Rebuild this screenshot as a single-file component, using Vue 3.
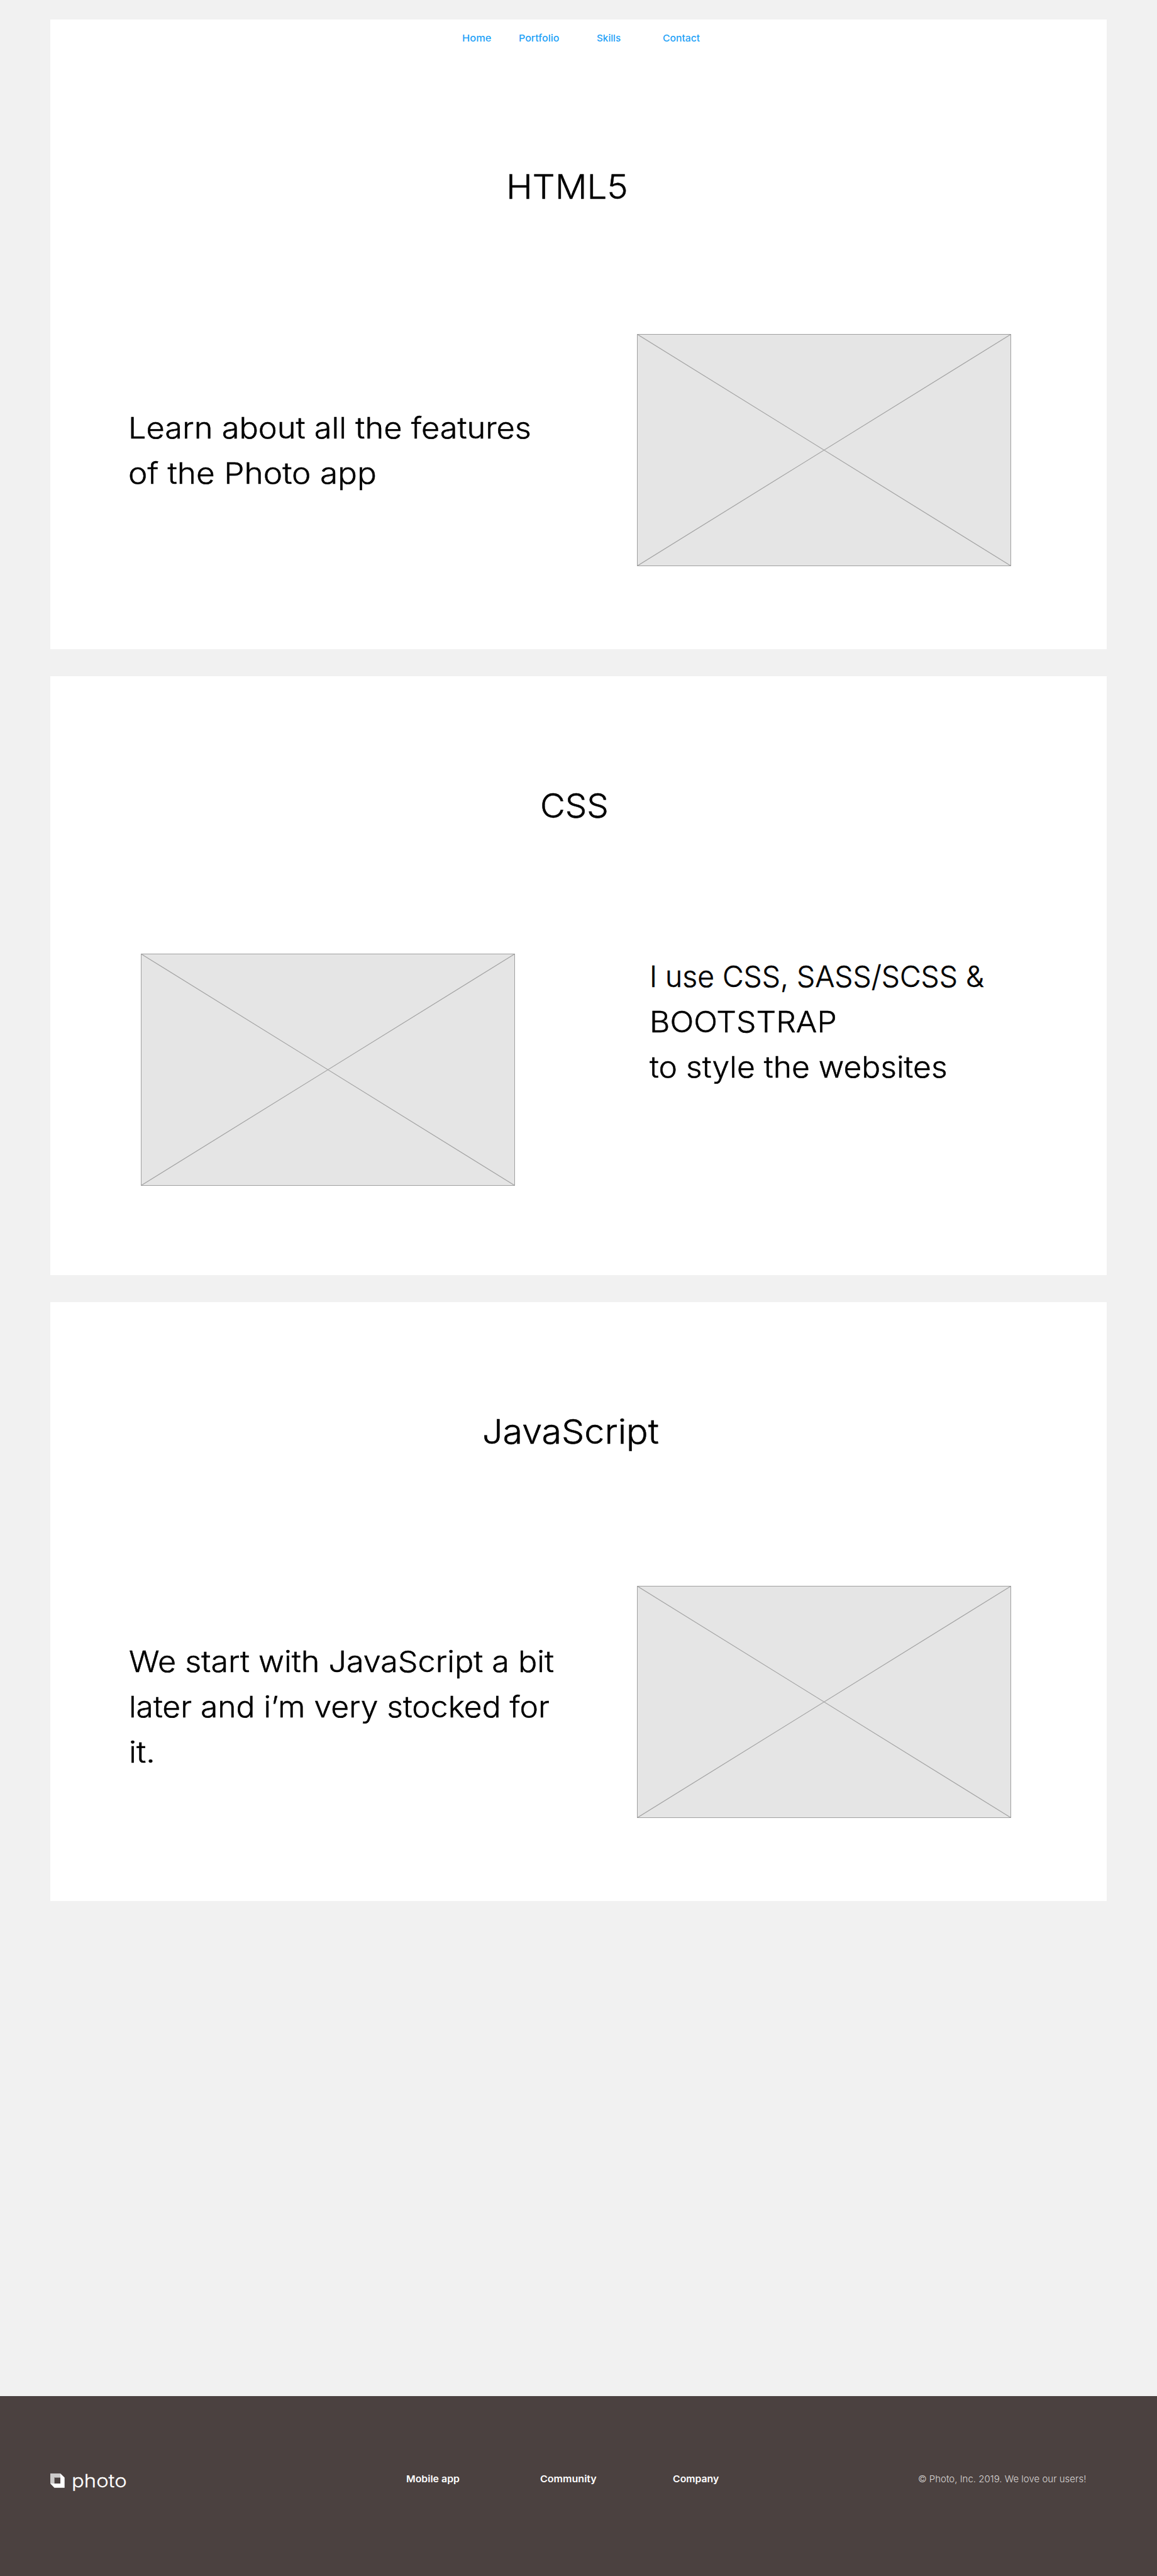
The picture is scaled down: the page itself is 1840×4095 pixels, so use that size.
<script setup>
const nav = [
  { label: 'Home', stretch: 1.096 },
  { label: 'Portfolio', stretch: 1.068 },
  { label: 'Skills', stretch: 1.017 },
  { label: 'Contact', stretch: 1.047 },
]

const cards = [
  {
    id: 'html',
    title: { text: 'HTML5', stretch: 1.045 },
    lines: [
      { text: 'Learn about all the features', stretch: 1.075 },
      { text: 'of the Photo app', stretch: 1.092 },
    ],
  },
  {
    id: 'css',
    title: { text: 'CSS', stretch: 1.012 },
    lines: [
      { text: 'I use CSS, SASS/SCSS &', stretch: 0.983 },
      { text: 'BOOTSTRAP', stretch: 1.061 },
      { text: 'to style the websites', stretch: 1.059 },
    ],
  },
  {
    id: 'js',
    title: { text: 'JavaScript', stretch: 1.063 },
    lines: [
      { text: 'We start with JavaScript a bit', stretch: 1.069 },
      { text: 'later and i’m very stocked for', stretch: 1.058 },
      { text: 'it.', stretch: 1.092 },
    ],
  },
]

const links = [
  { label: 'Mobile app', stretch: 1.06 },
  { label: 'Community', stretch: 1.07 },
  { label: 'Company', stretch: 1.054 },
]

// Widens the letterforms horizontally from their left edge.
const wide = (stretch) => ({ transform: `scaleX(${stretch})` })
</script>

<template>
  <div class="page">
    <main>
      <section v-for="(card, i) in cards" :key="card.id" class="card" :class="card.id">
        <nav v-if="i === 0" class="nav">
          <a v-for="item in nav" :key="item.label" class="wide" :style="wide(item.stretch)">{{ item.label }}</a>
        </nav>
        <h2><span class="wide" :style="wide(card.title.stretch)">{{ card.title.text }}</span></h2>
        <div class="row">
          <p>
            <span v-for="line in card.lines" :key="line.text" class="wide" :style="wide(line.stretch)">{{ line.text }}</span>
          </p>
          <svg class="placeholder" width="595" height="369" viewBox="0 0 595 369">
            <rect x="0.5" y="0.5" width="594" height="368" fill="#e5e5e5" stroke="#a0a0a0" />
            <path d="M.5 .5 594.5 368.5M594.5 .5 .5 368.5" stroke="#a3a3a3" stroke-width="1.2" fill="none" />
          </svg>
        </div>
      </section>
    </main>

    <footer>
      <div class="brand">
        <svg width="23" height="23" viewBox="0 0 23 23">
          <path d="M16 0 22.7 6.5V22.7H6.5L0 16H16Z" fill="#fff" />
          <path fill-rule="evenodd" d="M0 0H16V16H0ZM6 6V16H16V6Z" fill="#cbc9c9" />
          <path d="M6 6H16V7H7V16H6Z" fill="#999494" />
          <path d="M7 7H16V16H7Z" fill="#4b4140" />
        </svg>
        <span class="wide" :style="wide(1.133)">photo</span>
      </div>
      <div class="links">
        <a v-for="link in links" :key="link.label" class="wide" :style="wide(link.stretch)">{{ link.label }}</a>
      </div>
      <small>© Photo, Inc. 2019. We love our users!</small>
    </footer>
  </div>
</template>

<style>
body {
  margin: 0;
  background: #f1f1f1;
}
</style>

<style scoped>
.page {
  box-sizing: border-box;
  width: 1840px;
  height: 4095px;
  padding-top: 31px;
  display: flex;
  flex-direction: column;
  justify-content: space-between;
  overflow: hidden;
  background: #f1f1f1;
  color: #000;
  font-family: Inter, "Liberation Sans", sans-serif;
  white-space: nowrap;
}
.wide {
  display: block;
  width: max-content;
  transform-origin: 0 50%;
}
main {
  display: flex;
  flex-direction: column;
  gap: 43px;
  margin: 0 80px;
}
.card {
  height: 952px;
  background: #fff;
}
.card.html {
  height: 1001px;
}
.nav {
  display: grid;
  grid-template-columns: 89.5px 124px 104.8px auto;
  padding: 20px 0 0 655.3px;
  font-size: 15px;
  font-weight: 500;
  line-height: 20px;
  color: #1ea1f7;
}
h2 {
  margin: 0;
  padding-top: 171px;
  font-size: 54px;
  font-weight: 300;
  line-height: 70px;
  -webkit-text-stroke: 0.5px #000;
}
.html h2 {
  padding: 191px 0 0 724.7px;
}
.css h2 {
  padding-left: 779.1px;
}
.js h2 {
  padding-left: 687.3px;
}
.row {
  display: flex;
  align-items: flex-start;
  margin-top: 199px;
  padding-left: 124px;
}
.css .row {
  flex-direction: row-reverse;
  justify-content: flex-end;
  margin-top: 200px;
  padding-left: 144px;
}
.js .row {
  margin-top: 210px;
}
p {
  width: 809px;
  margin: 113px 0 0;
  font-size: 47px;
  font-weight: 300;
  line-height: 72px;
  -webkit-text-stroke: 0.5px #000;
}
.css p {
  width: auto;
  margin: 0 0 0 213.5px;
}
.js p {
  width: 807.8px;
  margin: 84px 0 0 1.2px;
}
.placeholder {
  display: block;
  flex: none;
}
footer {
  box-sizing: border-box;
  height: 286px;
  display: grid;
  grid-template-columns: 565.9px 814px auto;
  padding: 122px 0 0 80px;
  background: #4b4140;
  color: #fff;
  font-size: 15px;
  line-height: 20px;
}
.brand {
  display: flex;
  align-items: flex-start;
  gap: 11.4px;
  height: 36px;
}
.brand svg {
  margin-top: 1px;
}
.brand span {
  margin-top: -5px;
  font-size: 29px;
  font-weight: 300;
  line-height: 36px;
  -webkit-text-stroke: 0.3px #fff;
}
.links {
  display: grid;
  grid-template-columns: 212.7px 211px auto;
  font-weight: 600;
}
small {
  font-size: 15px;
  font-weight: 300;
  color: #d8d5d4;
}
</style>
